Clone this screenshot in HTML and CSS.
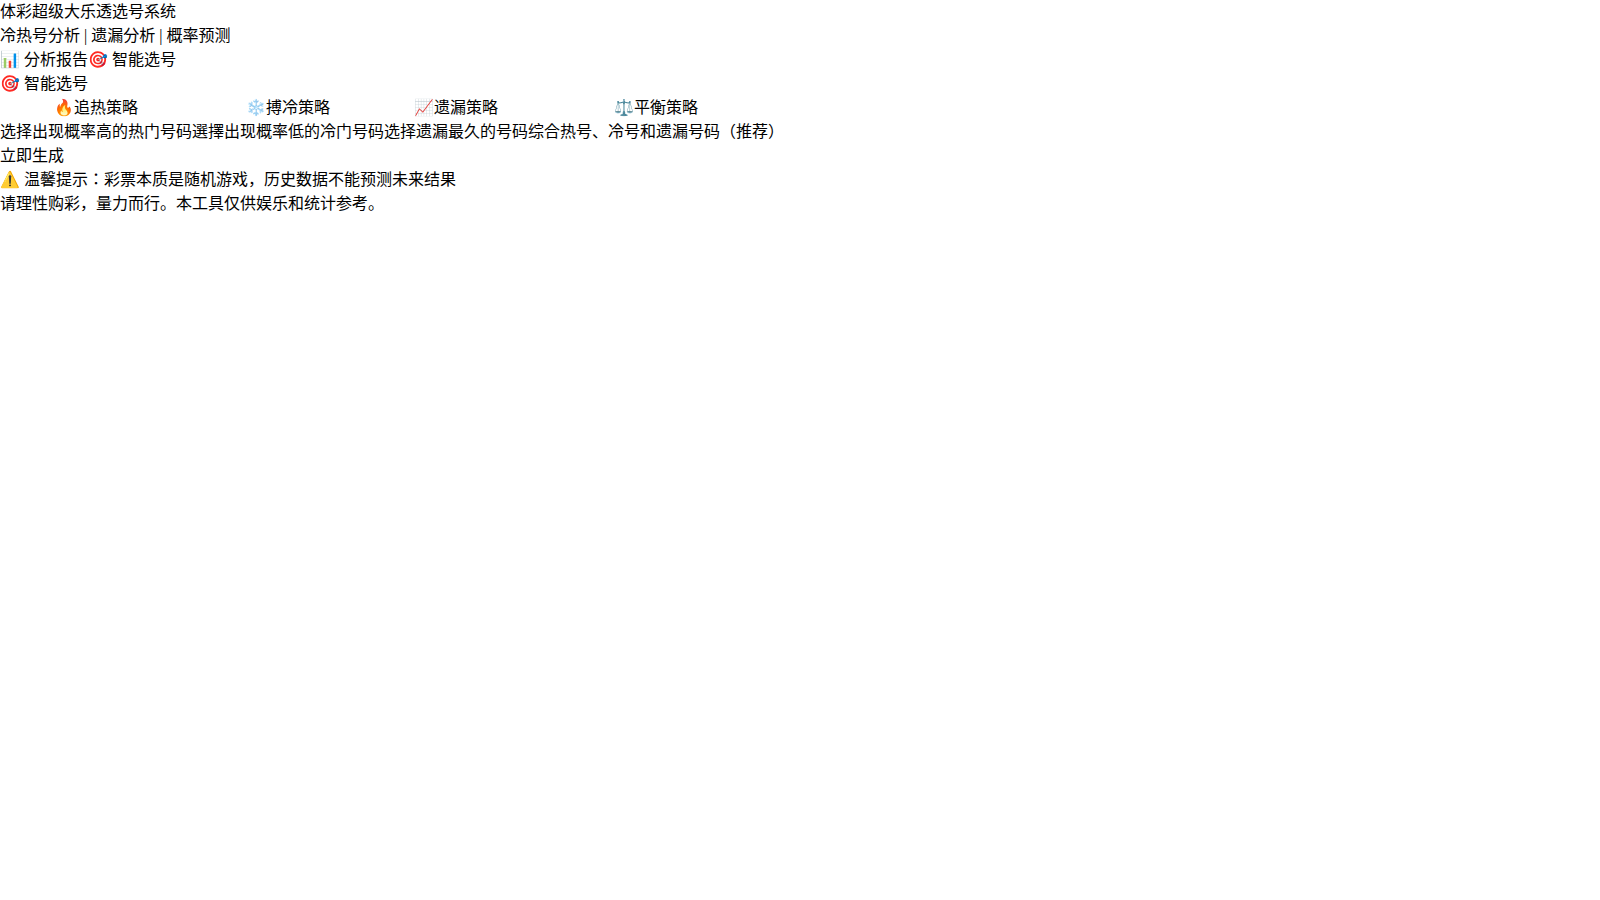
FILE: index.html
```html
<!DOCTYPE html>
<html lang="zh-CN">
<head>
<meta charset="utf-8">
<meta name="viewport" content="width=device-width, initial-scale=1">
<title>体彩超级大乐透选号系统</title>
<link rel="stylesheet" href="styles.css">
</head>
<body>
<header>
<h1>体彩超级大乐透选号系统</h1>
<p>冷热号分析 | 遗漏分析 | 概率预测</p>
</header>
<nav class="tabs"><button type="button">📊 分析报告</button><button type="button">🎯 智能选号</button></nav>
<main>
<h2>🎯 智能选号</h2>
<div class="strategies">
<button type="button" class="strategy"><span>🔥追热策略</span><span>选择出现概率高的热门号码</span></button>
<button type="button" class="strategy"><span>❄️搏冷策略</span><span>選擇出现概率低的冷门号码</span></button>
<button type="button" class="strategy"><span>📈遗漏策略</span><span>选择遗漏最久的号码</span></button>
<button type="button" class="strategy"><span>⚖️平衡策略</span><span>综合热号、冷号和遗漏号码（推荐）</span></button>
</div>
<button type="button" class="generate">立即生成</button>
</main>
<footer>
<p>⚠️ 温馨提示：彩票本质是随机游戏，历史数据不能预测未来结果</p>
<p>请理性购彩，量力而行。本工具仅供娱乐和统计参考。</p>
</footer>
</body>
</html>
```

FILE: styles.css
```css
* {
  margin: 0;
  padding: 0;
  box-sizing: border-box;
}

body {
  background: #fff;
  color: #000;
  font: 16px/24px "Liberation Serif", "Noto Sans CJK JP", serif;
  font-feature-settings: "locl" 0;
}

h1,
h2 {
  font: inherit;
  font-feature-settings: inherit;
}

button {
  border: 0;
  background: none;
  color: inherit;
  font: inherit;
  font-feature-settings: inherit;
  cursor: pointer;
}

.tabs,
.strategies {
  display: flex;
}

.strategy {
  display: flex;
  flex-direction: column;
  align-items: center;
  white-space: nowrap;
}

.generate {
  display: block;
}
```
